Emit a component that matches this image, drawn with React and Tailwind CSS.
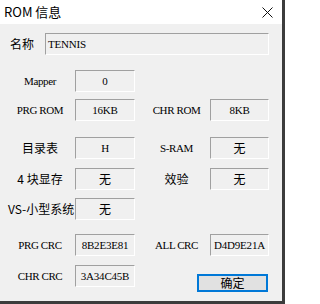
import React from 'react';

const mono = { fontFamily: '"Liberation Serif", "Times New Roman", serif' };
const cjk = { fontFamily: '"Noto Sans CJK SC", "Noto Sans", sans-serif' };

const Field = ({ children, className = '', cn = false }) => (
  <div
    className={`h-[22px] flex items-center justify-center border-t border-l border-[#a0a0a0] border-r border-b border-r-white border-b-white text-black ${cn ? 'text-[12px]' : 'text-[11px] tracking-[-0.2px]'} ${className}`}
    style={cn ? cjk : mono}
  >
    {children}
  </div>
);

const Label = ({ children, cn = false, right = false }) => (
  <div
    className={`w-[75px] text-center whitespace-nowrap text-black ${right ? 'pl-[8px]' : 'pl-[5px]'} ${cn ? 'text-[12px]' : 'text-[11px] tracking-[-0.4px]'}`}
    style={cn ? cjk : mono}
  >
    {children}
  </div>
);

const Row = ({ className = '', children }) => (
  <div className={`flex items-center h-[22px] ${className}`}>{children}</div>
);

export default function App() {
  return (
    <div className="w-[285px] h-[304px] bg-[#3c3c3c] overflow-hidden">
      <div className="w-[282px] h-[301px] bg-[#f0f0f0] flex flex-col">
        <div className="h-[24px] bg-white flex items-center justify-between pl-[4px] pr-[8px]">
          <span className="text-[13px] text-black" style={cjk}>ROM 信息</span>
          <svg width="11" height="11" viewBox="0 0 11 11" className="mr-[1px]">
            <path d="M0.5 0.5 L10.5 10.5 M10.5 0.5 L0.5 10.5" stroke="#111" strokeWidth="1" />
          </svg>
        </div>

        <Row className="mt-[9px]">
          <div className="w-[45px] pl-[10px] text-[12px] text-black" style={cjk}>名称</div>
          <Field className="w-[224px] !justify-start pl-[2px]">TENNIS</Field>
        </Row>

        <Row className="mt-[15px]">
          <Label>Mapper</Label>
          <Field className="w-[60px]">0</Field>
        </Row>

        <Row className="mt-[7px]">
          <Label>PRG ROM</Label>
          <Field className="w-[60px]">16KB</Field>
          <Label right>CHR ROM</Label>
          <Field className="w-[59px]">8KB</Field>
        </Row>

        <Row className="mt-[16px]">
          <Label cn>目录表</Label>
          <Field className="w-[60px]">H</Field>
          <Label right>S-RAM</Label>
          <Field className="w-[59px]" cn>无</Field>
        </Row>

        <Row className="mt-[9px]">
          <Label cn>4 块显存</Label>
          <Field className="w-[60px]" cn>无</Field>
          <Label cn right>效验</Label>
          <Field className="w-[59px]" cn>无</Field>
        </Row>

        <Row className="mt-[8px]">
          <div className="w-[75px] pl-[8px] whitespace-nowrap text-[12px] text-black" style={cjk}>VS-小型系统</div>
          <Field className="w-[60px]" cn>无</Field>
        </Row>

        <Row className="mt-[14px]">
          <Label>PRG CRC</Label>
          <Field className="w-[60px]">8B2E3E81</Field>
          <Label right>ALL CRC</Label>
          <Field className="w-[59px]">D4D9E21A</Field>
        </Row>

        <div className="flex items-start mt-[9px]">
          <Row>
            <Label>CHR CRC</Label>
            <Field className="w-[60px]">3A34C45B</Field>
          </Row>
          <button
            className="ml-[62px] mt-[9px] w-[71px] h-[18px] bg-[#e1e1e1] border-2 border-[#0078d7] flex items-center justify-center text-[12px] text-black leading-none"
            style={cjk}
          >
            确定
          </button>
        </div>
      </div>
    </div>
  );
}
